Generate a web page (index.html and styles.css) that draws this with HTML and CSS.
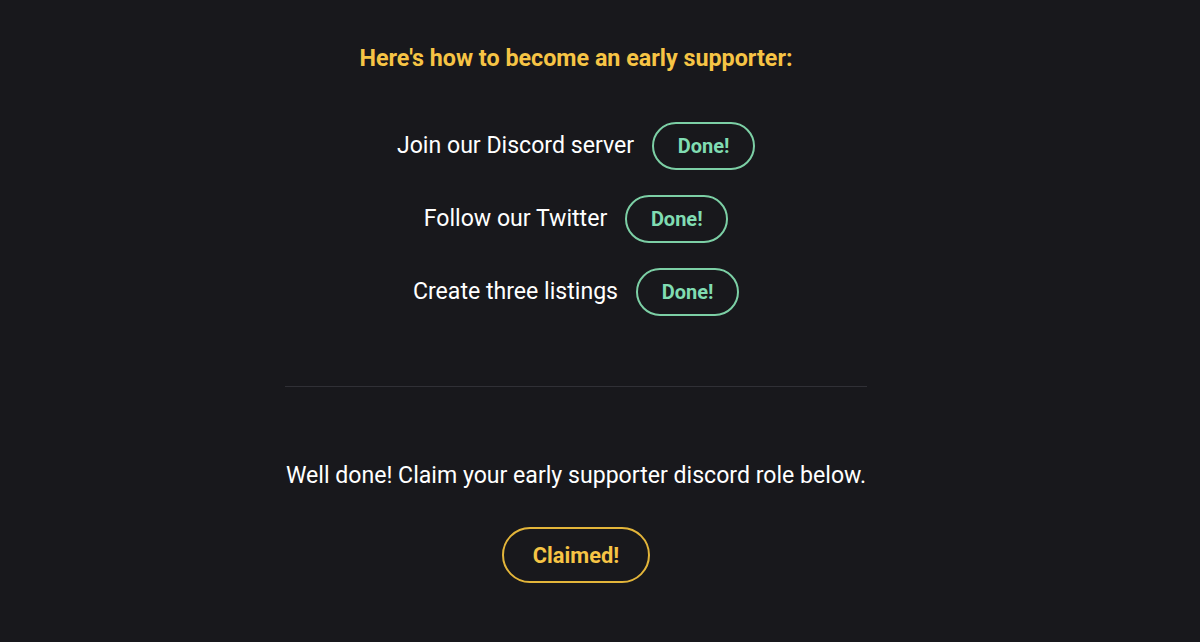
FILE: index.html
```html
<!DOCTYPE html>
<html lang="en">
<head>
<meta charset="utf-8">
<link rel="stylesheet" href="styles.css">
</head>
<body>
<main class="page">
  <h2 class="title">Here's how to become an early supporter:</h2>
  <ul class="steps">
    <li class="step"><span class="step-label">Join our Discord server</span><button class="pill pill-done">Done!</button></li>
    <li class="step"><span class="step-label">Follow our Twitter</span><button class="pill pill-done">Done!</button></li>
    <li class="step"><span class="step-label">Create three listings</span><button class="pill pill-done">Done!</button></li>
  </ul>
  <div class="claim">
    <hr class="divider">
    <p class="claim-text">Well done! Claim your early supporter discord role below.</p>
    <button class="pill pill-claimed">Claimed!</button>
  </div>
</main>
</body>
</html>
```

FILE: styles.css
```css
html, body {
  margin: 0;
  padding: 0;
  background: #18181c;
  height: 100%;
}
body {
  font-family: Roboto, "Noto Sans", sans-serif;
  color: #ffffff;
}
.page {
  width: 1152px;
  display: flex;
  flex-direction: column;
  align-items: center;
  padding-top: 43px;
}
.title {
  margin: 0;
  font-size: 23.3px;
  font-weight: 700;
  color: #f6c445;
  line-height: 30px;
}
.steps {
  list-style: none;
  margin: 49px 0 0;
  padding: 0;
  display: flex;
  flex-direction: column;
  align-items: center;
  gap: 25px;
}
.step {
  display: flex;
  align-items: center;
  gap: 18px;
}
.step-label {
  font-size: 23.1px;
  line-height: 30px;
}
.pill {
  font-family: inherit;
  background: transparent;
  border-radius: 999px;
  font-weight: 700;
  cursor: pointer;
  padding: 0;
  display: flex;
  align-items: center;
  justify-content: center;
}
.pill-done {
  width: 103px;
  height: 48px;
  border: 2px solid #7ccfa5;
  color: #80dcb2;
  font-size: 20px;
}
.claim {
  display: flex;
  flex-direction: column;
  align-items: center;
  margin-top: 70px;
}
.divider {
  width: 582px;
  border: 0;
  height: 1px;
  background: #303036;
  margin: 0;
}
.claim-text {
  margin: 74px 0 0;
  font-size: 23.1px;
  line-height: 30px;
}
.pill-claimed {
  margin-top: 36px;
  width: 148px;
  height: 56px;
  border: 2px solid #e3b53a;
  color: #f6c445;
  font-size: 21.8px;
}
```
